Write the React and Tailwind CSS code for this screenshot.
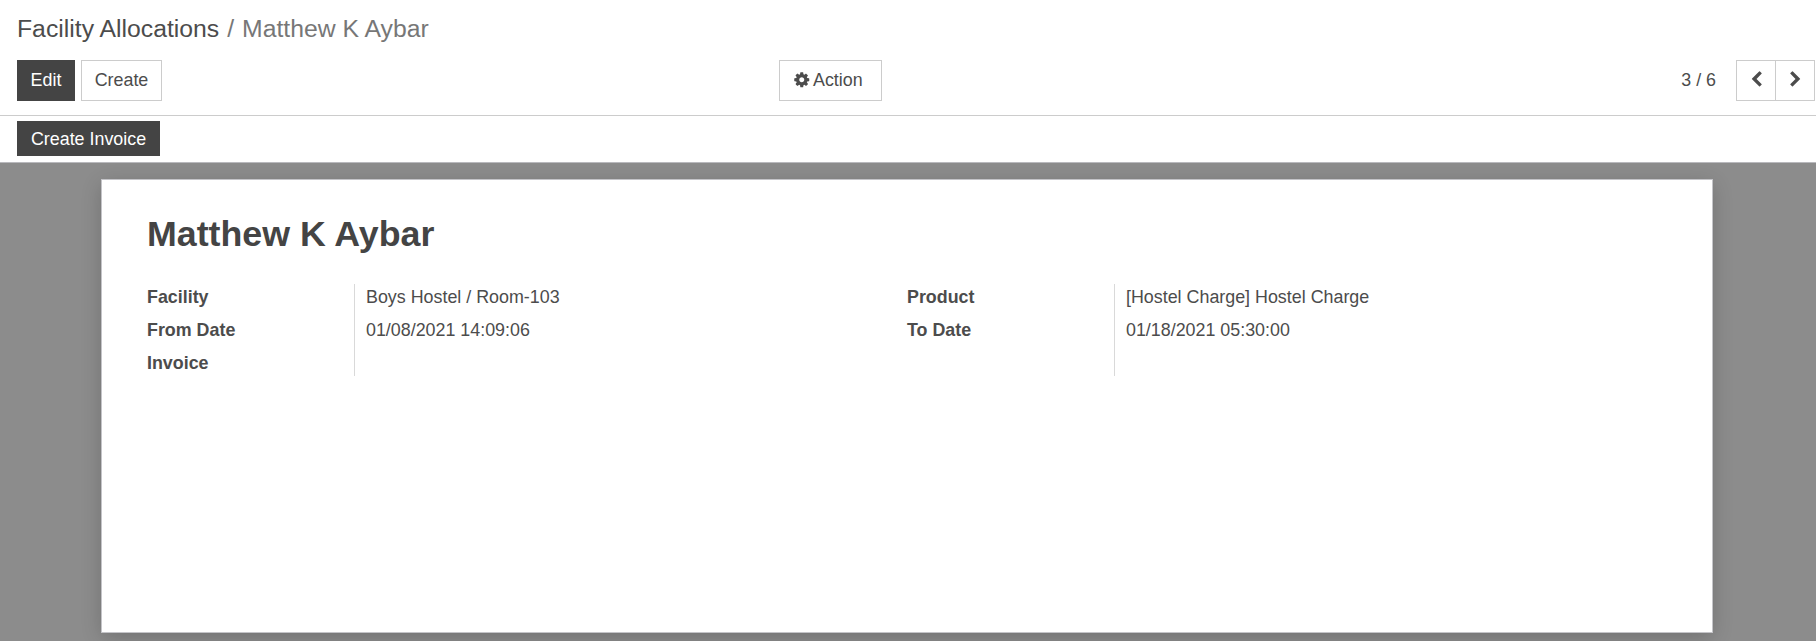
import React from 'react';

const btnLight = 'h-[41px] border border-[#cccccc] bg-white text-[#4c4c4c] flex items-center justify-center';

// font awesome 4 glyphs, the newer ones in react-icons are thinner
const CogIcon = () => (
    <svg viewBox="0 0 1792 1792" className="w-[17.5px] h-[17.5px] mb-[2px] fill-[#4c4c4c]">
        <path d="M1152 896q0-106-75-181t-181-75-181 75-75 181 75 181 181 75 181-75 75-181zm512-109v222q0 12-8 23t-20 13l-185 28q-19 54-39 91 35 50 107 138 10 12 10 25t-9 23q-27 37-99 108t-94 71q-12 0-26-9l-138-108q-44 23-91 38-16 136-29 186-7 28-36 28h-222q-14 0-24.5-8.5t-11.5-21.5l-28-184q-49-16-90-37l-141 107q-10 9-25 9-14 0-25-11-126-114-165-168-7-10-7-23 0-12 8-23 15-21 51-66.5t54-70.5q-27-50-41-99l-183-27q-13-2-21-12.5t-8-23.5v-222q0-12 8-23t19-13l186-28q14-46 39-92-40-57-107-138-10-12-10-24 0-10 9-23 26-36 98.5-107.5t94.5-71.5q13 0 26 10l138 107q44-23 91-38 16-136 29-186 7-28 36-28h222q14 0 24.5 8.5t11.5 21.5l28 184q49 16 90 37l142-107q9-9 24-9 13 0 25 10 129 119 165 170 7 8 7 22 0 12-8 23-15 21-51 66.5t-54 70.5q26 50 41 98l183 28q13 2 21 12.5t8 23.5z" />
    </svg>
);

const ChevronIcon = ({ flip }) => (
    <svg viewBox="0 0 1792 1792" className={`w-[17px] h-[17px] mb-[3px] fill-[#4c4c4c] ${flip ? '-scale-x-100' : ''}`}>
        <path d="M1427 301l-531 531 531 531q19 19 19 45t-19 45l-166 166q-19 19-45 19t-45-19l-742-742q-19-19-19-45t19-45l742-742q19-19 45-19t45 19l166 166q19 19 19 45t-19 45z" />
    </svg>
);

const Field = ({ label, value, last }) => (
    <>
        <div className={`${last ? 'h-[26px]' : 'h-[33px]'} leading-[26px] font-bold`}>{label}</div>
        <div className={`${last ? 'h-[26px]' : 'h-[33px]'} leading-[26px] pl-[11px] border-l border-[#d9d9d9]`}>{value}</div>
    </>
);

const App = () => {
    return (
        <div className="w-[1816px] h-[641px] overflow-hidden flex flex-col bg-white font-['Liberation_Sans',Arial,sans-serif] text-[17.875px] text-[#4c4c4c]">
            <div className="h-[116px] shrink-0 border-b border-[#cccccc] pl-[17px] pr-px pt-[12px]">
                <div className="h-[34px] flex items-center text-[24.75px] leading-none">
                    <span>Facility Allocations</span>
                    <span className="mx-[8px] text-[#777777]">/</span>
                    <span className="text-[#777777]">Matthew K Aybar</span>
                </div>
                <div className="mt-[14px] flex items-start">
                    <div className="w-[762px] flex gap-[6px]">
                        <button className="h-[41px] w-[58px] bg-[#444444] text-white">Edit</button>
                        <button className={`${btnLight} w-[81px]`}>Create</button>
                    </div>
                    <button className={`${btnLight} w-[103px] !justify-start pl-[13px] gap-[2.5px]`}>
                        <CogIcon />
                        Action
                    </button>
                    <div className="ml-auto flex items-center">
                        <span className="mr-[20px]">3 / 6</span>
                        <button className={`${btnLight} w-[40px]`}><ChevronIcon /></button>
                        <button className={`${btnLight} w-[39px] border-l-0`}><ChevronIcon flip /></button>
                    </div>
                </div>
            </div>
            <div className="h-[46px] shrink-0 px-[17px] pt-[5px]">
                <button className="h-[35px] w-[143px] pt-px bg-[#444444] text-white">Create Invoice</button>
            </div>
            <div className="flex-1 min-h-0 bg-[#8c8c8c] border-t border-[#b9b9bd] px-[101px] pt-[16px]">
                <div className="h-[454px] w-[1612px] bg-white border border-[#c4c4c8] shadow-[0_5px_20px_-1px_rgba(0,0,0,0.2)] pl-[45px] pt-[30px]">
                    <h1 className="h-[50px] flex items-center text-[35.75px] font-bold leading-none text-[#444444]">Matthew K Aybar</h1>
                    <div className="mt-[24px] flex">
                        <div className="w-[760px] grid grid-cols-[207px_1fr]">
                            <Field label="Facility" value="Boys Hostel / Room-103" />
                            <Field label="From Date" value="01/08/2021 14:09:06" />
                            <Field label="Invoice" value="" last />
                        </div>
                        <div className="w-[760px] grid grid-cols-[207px_1fr]">
                            <Field label="Product" value="[Hostel Charge] Hostel Charge" />
                            <Field label="To Date" value="01/18/2021 05:30:00" />
                            <Field label="" value="" last />
                        </div>
                    </div>
                </div>
            </div>
        </div>
    );
};

export default App;
